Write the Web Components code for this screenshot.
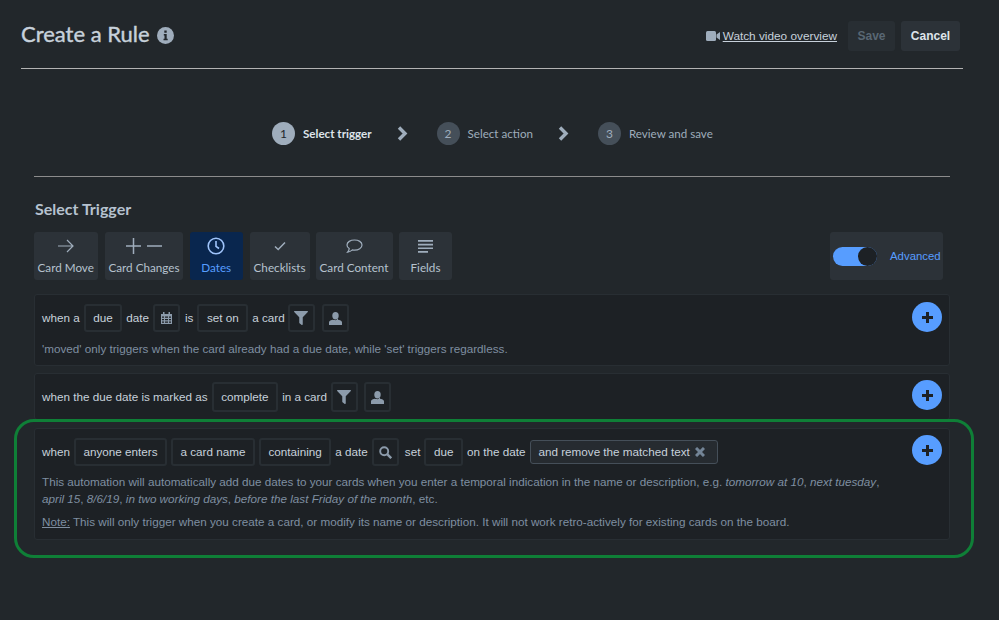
<!DOCTYPE html>
<html lang="en">
<head>
<meta charset="utf-8">
<title>Create a Rule</title>
<style>
  html, body { margin: 0; background: #22272b; }
  body { font-family: "Liberation Sans", Arial, sans-serif; color: #b6c2cf; }
  em { font-style: italic; }
  u { text-underline-offset: 1px; }
</style>
</head>
<body>
<rule-page>
  <rule-header></rule-header>
  <rule-stepper></rule-stepper>
  <trigger-bar>
    <trigger-tab icon="arrow" label="Card Move" style="width:63.5px"></trigger-tab>
    <trigger-tab icon="plusminus" label="Card Changes" style="width:78px;margin-left:1px"></trigger-tab>
    <trigger-tab icon="clock" label="Dates" active style="width:53.5px"></trigger-tab>
    <trigger-tab icon="check" label="Checklists" style="width:60px"></trigger-tab>
    <trigger-tab icon="comment" label="Card Content" style="width:77px;margin-left:-.5px"></trigger-tab>
    <trigger-tab icon="lines" label="Fields" style="width:53px"></trigger-tab>
  </trigger-bar>

  <trigger-card style="height:72px">
    when a <rule-chip>due</rule-chip> date <rule-chip icon="calendar"></rule-chip>
    <span style="margin-left:1px">is</span> <rule-chip>set on</rule-chip> a card
    <rule-chip icon="filter" style="margin-left:-1px"></rule-chip> <rule-chip icon="user" style="margin-left:3px"></rule-chip>
    <div slot="desc">'moved' only triggers when the card already had a due date, while 'set' triggers regardless.</div>
  </trigger-card>

  <trigger-card short>
    when the due date is marked as <rule-chip>complete</rule-chip> in a card
    <rule-chip icon="filter"></rule-chip> <rule-chip icon="user" style="margin-left:2px"></rule-chip>
  </trigger-card>

  <trigger-card tight>
    when <rule-chip>anyone enters</rule-chip> <rule-chip>a card name</rule-chip> <rule-chip>containing</rule-chip>
    a date <rule-chip icon="search"></rule-chip> <span style="margin-left:2px">set</span> <rule-chip>due</rule-chip>
    on the date <rule-tag>and remove the matched text</rule-tag>
    <div slot="desc" style="line-height:17px">This automation will automatically add due dates to your cards when you enter a temporal indication in the name or description, e.g. <em>tomorrow at 10</em>, <em>next tuesday</em>, <em>april 15</em>, <em>8/6/19</em>, <em>in two working days</em>, <em>before the last Friday of the month</em>, etc.</div>
    <div slot="desc" style="margin-top:6px;line-height:17px"><u>Note:</u> This will only trigger when you create a card, or modify its name or description. It will not work retro-actively for existing cards on the board.</div>
  </trigger-card>

  <highlight-ring></highlight-ring>
</rule-page>

<script>
const ICONS = {
  arrow: '<svg width="16" height="14" viewBox="0 0 16 14" fill="none" stroke="currentColor" stroke-width="1.2"><path d="M0 7h15M9 1l6 6-6 6"/></svg>',
  plusminus: '<svg width="36" height="16" viewBox="0 0 36 16" fill="none" stroke="currentColor" stroke-width="1.5"><path d="M0 8h15M7.5 0v16M21 8h15"/></svg>',
  clock: '<svg width="18" height="18" viewBox="0 0 18 18" fill="none" stroke="currentColor" stroke-width="1.6"><circle cx="9" cy="9" r="7.8"/><path d="M9 4v5.3l3 2.2"/></svg>',
  check: '<svg width="12" height="10" viewBox="0 0 12 10" fill="none" stroke="currentColor" stroke-width="1.5"><path d="M1 5.5l3.2 3L11 1.5"/></svg>',
  comment: '<svg width="17" height="15" viewBox="0 0 17 15" fill="none" stroke="currentColor" stroke-width="1.2"><path d="M8.5 1C4.4 1 1 3 1 6c0 1.600 1 2.800 2.200 3.600-.1 1.300-.7 2.500-1.600 3.600 1.800-.3 3.600-1.200 4.800-2.300.7.100 1.400.2 2.100.2 4.100 0 7.500-2.100 7.500-5.100S12.600 1 8.500 1z"/></svg>',
  lines: '<svg width="15" height="13" viewBox="0 0 15 13" fill="currentColor"><path d="M0 0h15v1.700H0zM0 3.700h15v1.700H0zM0 7.400h15v1.700H0zM0 11.100h10v1.700H0z"/></svg>',
  calendar: '<svg width="11" height="12" viewBox="0 0 11 12" fill="currentColor"><path d="M0 2h11v10H0zM2 0h1.500v2H2zM7.500 0H9v2H7.500z"/><path fill="#1d2125" d="M1 4.500h2v1.200H1zM4 4.500h3v1.200H4zM8 4.500h2v1.200H8zM1 7h2v1.200H1zM4 7h3v1.200H4zM8 7h2v1.200H8zM1 9.500h2v1.200H1zM4 9.500h3v1.200H4zM8 9.500h2v1.200H8z"/></svg>',
  filter: '<svg width="14" height="14" viewBox="0 0 512 512" fill="currentColor"><path d="M487.976 0H24.028C2.71 0-8.047 25.866 7.058 40.971L192 225.941V432c0 7.831 3.821 15.17 10.237 19.662l80 55.98C298.02 518.69 320 507.493 320 487.98V225.941l184.947-184.97C520.021 25.896 509.338 0 487.976 0z"/></svg>',
  user: '<svg width="13" height="13" viewBox="0 0 13 13" fill="currentColor"><ellipse cx="6.500" cy="3.700" rx="3.200" ry="3.700"/><path d="M0 10.300c0-1.500 2.300-2.300 4-2.500.8.500 4.200.5 5 0 1.700.2 4 1 4 2.500V13H0z"/></svg>',
  search: '<svg width="13" height="13" viewBox="0 0 13 13" fill="none" stroke="currentColor"><circle cx="5.200" cy="5.200" r="4" stroke-width="1.900"/><path d="M8.200 8.200l4 4" stroke-width="2.400"/></svg>'
};

class RulePage extends HTMLElement {
  constructor() {
    super();
    this.attachShadow({ mode: 'open' }).innerHTML = `
      <style>
        :host { display: block; position: relative; width: 999px; height: 620px; overflow: hidden; }
      </style>
      <slot></slot>
    `;
  }
}

class RuleHeader extends HTMLElement {
  constructor() {
    super();
    this.attachShadow({ mode: 'open' }).innerHTML = `
      <style>
        :host { display: flex; align-items: center; box-sizing: border-box; height: 69px; margin: 0 36px 0 21px; padding: 4px 3px 0 0; border-bottom: 1px solid #b3b3b3; }
        h1 { margin: -4px 0 0; font: 400 22px/34px Lato, sans-serif; color: #c7d1db; -webkit-text-stroke: .4px #c7d1db; }
        .info { width: 17px; height: 17px; margin-left: 7px; margin-top: -2px; flex: none; }
        .video { display: flex; align-items: center; margin-left: auto; font: 11.800px "Liberation Sans", sans-serif; color: #c7d1db; }
        .video svg { margin-right: 3px; }
        .video a { color: inherit; }
        button { box-sizing: border-box; height: 30px; border: 0; border-radius: 3px; font: 700 12px "Liberation Sans", sans-serif; padding: 0; }
        .save { width: 47px; margin-left: 11px; background: #282e33; color: #596773; }
        .cancel { width: 59px; margin-left: 6px; background: #2c3238; color: #dee4ea; }
      </style>
      <h1>Create a Rule</h1>
      <svg class="info" viewBox="0 0 17 17"><circle cx="8.500" cy="8.500" r="8.500" fill="#9fadbc"/><path fill="#22272b" d="M7.300 3.500h2.400v2.200H7.300zM6.800 7h2.900v4.800h1v1.400H6.500v-1.400h1V8.400h-.7z"/></svg>
      <span class="video">
        <svg width="14" height="10" viewBox="0 0 14 10" fill="#9fadbc"><rect width="10" height="10" rx="1.500"/><path d="M10.500 3.500L14 1v8l-3.500-2.500z"/></svg>
        <a href="#">Watch video overview</a>
      </span>
      <button class="save">Save</button>
      <button class="cancel">Cancel</button>
    `;
  }
}

class RuleStepper extends HTMLElement {
  constructor() {
    super();
    const chevron = '<svg class="chev" width="12" height="15" viewBox="0 0 12 15" fill="none" stroke="#9fadbc" stroke-width="3.400"><path d="M2 1.500l6 6-6 6"/></svg>';
    this.attachShadow({ mode: 'open' }).innerHTML = `
      <style>
        :host { display: flex; align-items: center; box-sizing: border-box; height: 108px; margin: 0 49px 0 34px; padding: 22px 0 0 238px; border-bottom: 1px solid #8c8c8c; font: 400 11.600px Lato, sans-serif; color: #9fadbc; }
        .num { width: 23px; height: 23px; border-radius: 50%; background: #454f59; color: #9fadbc; display: flex; align-items: center; justify-content: center; margin-right: 8px; font-size: 12px; font-weight: 400; }
        .cur .num { background: #9fadbc; color: #22272b; }
        .step { display: flex; align-items: center; }
        .cur { font-weight: 700; color: #dee4ea; }
        .chev { margin: 0 28px 0 25px; }
      </style>
      <span class="step cur"><span class="num">1</span>Select trigger</span>${chevron}
      <span class="step"><span class="num">2</span>Select action</span>${chevron}
      <span class="step"><span class="num">3</span>Review and save</span>
    `;
  }
}

class TriggerBar extends HTMLElement {
  constructor() {
    super();
    this.attachShadow({ mode: 'open' }).innerHTML = `
      <style>
        :host { display: block; margin: 0 49px 14px 34px; }
        h2 { margin: 0; font: 700 16px/20px Lato, sans-serif; color: #b6c2cf; padding: 22px 0 0 1px; height: 33px; }
        .row { display: flex; gap: 6.500px; }
        .adv { display: flex; align-items: center; margin-left: auto; margin-right: 7px; width: 113px; height: 48px; box-sizing: border-box; padding-left: 3px; background: #2c3238; border-radius: 3px; font-size: 11.400px; color: #579dff; }
        .switch { position: relative; width: 44px; height: 19px; border-radius: 10px; background: #579dff; margin-right: 13px; }
        .switch::after { content: ""; position: absolute; right: 0; top: 0; width: 19px; height: 19px; border-radius: 50%; background: #1d2125; }
      </style>
      <h2>Select Trigger</h2>
      <div class="row">
        <slot></slot>
        <span class="adv"><span class="switch"></span>Advanced</span>
      </div>
    `;
  }
}

class TriggerTab extends HTMLElement {
  constructor() {
    super();
    this.attachShadow({ mode: 'open' }).innerHTML = `
      <style>
        :host { display: flex; flex-direction: column; align-items: center; flex: none; height: 48px; border-radius: 3px; background: #2c3238; color: #9fadbc; font: 400 11.700px Lato, sans-serif; }
        :host([active]) { background: #09264e; color: #579dff; }
        :host([active]) .ico { color: #9fc4fb; }
        .ico { display: flex; align-items: center; justify-content: center; height: 28px; }
        .txt { white-space: nowrap; line-height: 16px; margin-top: -1px; }
        :host(:not([active])) .txt { color: #b6c2cf; }
      </style>
      <span class="ico">${ICONS[this.getAttribute('icon')]}</span>
      <span class="txt">${this.getAttribute('label')}</span>
    `;
  }
}

class TriggerCard extends HTMLElement {
  constructor() {
    super();
    this.attachShadow({ mode: 'open' }).innerHTML = `
      <style>
        :host { display: block; position: relative; box-sizing: border-box; margin: 0 49px 7px 34px; padding: 9px 60px 9px 7px; background: #1d2125; border: 1px solid #282e33; border-radius: 3px; font-size: 11.700px; color: #c7d1db; }
        :host([short]) { height: 47px; margin-bottom: 8px; padding-top: 8px; --chip-h: 30px; }
        :host([tight]) { height: 112px; }
        .row { display: flex; align-items: center; gap: 4px; white-space: nowrap; line-height: 12px; }
        .desc { margin-top: 9px; color: #7f8fa1; line-height: 16px; }
        :host([tight]) .desc { margin-top: 7px; }
        .add { position: absolute; right: 7px; top: 7px; width: 30px; height: 30px; border-radius: 50%; background: #579dff; display: flex; align-items: center; justify-content: center; }
        :host([short]) .add, :host([tight]) .add { top: 6px; }
      </style>
      <div class="row"><slot></slot></div>
      <div class="desc"><slot name="desc"></slot></div>
      <span class="add"><svg width="11" height="11" viewBox="0 0 11 11" fill="#1d2125"><path d="M4 0h3v4h4v3H7v4H4V7H0V4h4z"/></svg></span>
    `;
  }
}

class RuleChip extends HTMLElement {
  constructor() {
    super();
    const icon = this.getAttribute('icon');
    this.attachShadow({ mode: 'open' }).innerHTML = `
      <style>
        :host { display: inline-flex; align-items: center; justify-content: center; box-sizing: border-box; height: var(--chip-h, 28px); padding: 0 7.500px; border: 2px solid #282e33; border-radius: 3px; color: #c7d1db; }
        :host([icon]) { width: 27px; padding: 0; color: #8c9bab; }
        svg { display: block; }
      </style>
      ${icon ? ICONS[icon] : '<slot></slot>'}
    `;
  }
}

class RuleTag extends HTMLElement {
  constructor() {
    super();
    this.attachShadow({ mode: 'open' }).innerHTML = `
      <style>
        :host { display: inline-flex; align-items: center; box-sizing: border-box; height: 24px; margin-left: 1px; padding: 0 12px 0 7px; background: #262b30; border: 1px solid #454f59; border-radius: 3px; color: #c7d1db; }
        svg { margin-left: 5px; }
      </style>
      <slot></slot>
      <svg width="10" height="10" viewBox="0 0 10 10" stroke="#738496" stroke-width="3"><path d="M1 1l8 8M9 1l-8 8"/></svg>
    `;
  }
}

class HighlightRing extends HTMLElement {
  constructor() {
    super();
    this.attachShadow({ mode: 'open' }).innerHTML = `
      <style>
        :host { position: absolute; left: 14px; top: 419px; width: 960px; height: 139px; box-sizing: border-box; border: 3px solid #0f7f37; border-radius: 20px; pointer-events: none; }
      </style>
    `;
  }
}

customElements.define('rule-page', RulePage);
customElements.define('rule-header', RuleHeader);
customElements.define('rule-stepper', RuleStepper);
customElements.define('trigger-bar', TriggerBar);
customElements.define('trigger-tab', TriggerTab);
customElements.define('trigger-card', TriggerCard);
customElements.define('rule-chip', RuleChip);
customElements.define('rule-tag', RuleTag);
customElements.define('highlight-ring', HighlightRing);
</script>
</body>
</html>
